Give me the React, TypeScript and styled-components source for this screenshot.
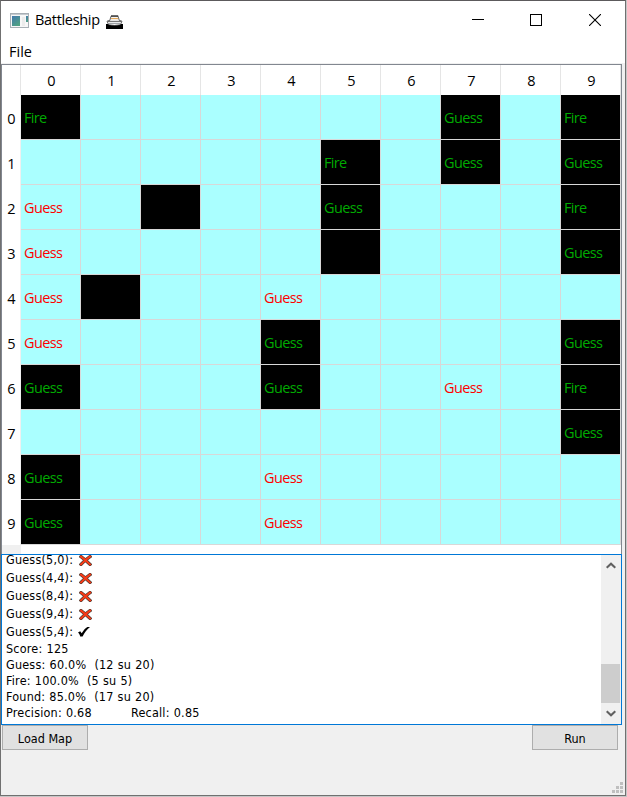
import React from "react";
import styled, { createGlobalStyle } from "styled-components";

const GlobalStyle = createGlobalStyle`
  html, body { margin: 0; padding: 0; overflow: hidden; }
  * { box-sizing: border-box; }
`;

const uiFont = `"Open Sans", "Noto Sans", sans-serif`;
const logFont = `"DejaVu Sans Condensed", "DejaVu Sans", sans-serif`;

const Desktop = styled.div`
  width: 627px;
  height: 797px;
  padding: 0 1px 1px 0;
  background: #c6c6c6;
`;

const Window = styled.main`
  width: 626px;
  height: 796px;
  display: flex;
  flex-direction: column;
  background: #f0f0f0;
  border: 1px solid #707070;
  border-top-color: #5c5a5c;
  color: #000;
  font-family: ${uiFont};
`;

const TitleBar = styled.header`
  height: 38px;
  flex: none;
  display: flex;
  align-items: center;
  padding-left: 9px;
  background: #fff;
`;

const Title = styled.h1`
  margin: 0 0 0 6px;
  width: 71px;
  font-size: 14.5px;
  font-weight: 400;
  letter-spacing: -0.32px;
  line-height: 20px;
  white-space: nowrap;
`;

const WindowControls = styled.div`
  display: flex;
  margin-left: auto;
  padding-right: 1px;
`;

const ControlButton = styled.button`
  width: 58.5px;
  height: 36px;
  padding: 0;
  border: 0;
  background: transparent;
  display: grid;
  place-items: center;
`;

const MenuBar = styled.nav`
  height: 25px;
  flex: none;
  padding-left: 8px;
  background: #fff;
  border-bottom: 1px solid #f0f0f0;
  font-size: 14.5px;
  line-height: 25px;
  letter-spacing: 0;
`;

const Table = styled.section`
  width: 621px;
  height: 490px;
  flex: none;
  display: grid;
  grid-template-columns: 19px repeat(10, 60px);
  grid-template-rows: 30px repeat(10, 45px) 9px;
  background: #fff;
  border: 1px solid #828790;
  border-bottom: 0;
`;

const Corner = styled.div`
  border-right: 1px solid #e5e5e5;
`;

const HeaderCell = styled.div`
  display: flex;
  align-items: center;
  justify-content: center;
  padding-left: 2px;
  border-right: 1px solid #e5e5e5;
  font-size: 14.5px;
`;

const RowLabel = styled.div`
  display: flex;
  align-items: center;
  justify-content: center;
  padding: 2px 0 0 1px;
  border-right: 1px solid #f0f0f0;
  font-size: 14.5px;
`;

const Cell = styled.div<{ $ship: boolean; $hit: boolean }>`
  display: flex;
  align-items: center;
  padding: 1px 0 0 3px;
  background: ${(p) => (p.$ship ? "#000" : "#aaffff")};
  color: ${(p) => (p.$hit ? "#00aa00" : "#ff0000")};
  border-right: 1px solid #d8d8d8;
  border-bottom: 1px solid #d8d8d8;
  font-size: 14.5px;
  letter-spacing: -0.65px;
`;

const TableFoot = styled.div`
  background: #f0f0f0;
`;

const LogPanel = styled.section`
  width: 621px;
  height: 171px;
  flex: none;
  display: flex;
  border: 1px solid #0078d7;
  background: #fff;
`;

const LogText = styled.div`
  flex: 1;
  display: flex;
  flex-direction: column;
  justify-content: flex-end;
  overflow: hidden;
  padding: 0 0 3px 4px;
  font-family: ${logFont};
  font-size: 12.5px;
  letter-spacing: 0.2px;
  word-spacing: 0.3px;
`;

const LogLine = styled.div<{ $icon?: boolean }>`
  flex: none;
  display: flex;
  align-items: center;
  height: ${(p) => (p.$icon ? 18 : 16)}px;
  line-height: 16px;
  white-space: pre;
`;

const GuessText = styled.span<{ $hit: boolean }>`
  width: ${(p) => (p.$hit ? 72 : 73)}px;
`;

const Metric = styled.span`
  width: 125px;
`;

const ScrollBar = styled.div`
  width: 20px;
  display: flex;
  flex-direction: column;
  align-items: flex-start;
  background: #f0f0f0;
`;

const ScrollArrow = styled.div`
  width: 19px;
  height: 21px;
  display: grid;
  place-items: center;
`;

const ScrollThumb = styled.div`
  width: 19px;
  height: 39px;
  margin-top: auto;
  background: #cdcdcd;
`;

const ButtonRow = styled.footer`
  width: 617px;
  display: flex;
  justify-content: space-between;
  padding-left: 1px;
`;

const PushButton = styled.button`
  width: 86px;
  height: 25px;
  padding: 1px 0 0;
  border: 1px solid #adadad;
  background: #e1e1e1;
  color: #000;
  font-family: ${logFont};
  font-size: 12.5px;
`;

const StatusStrip = styled.div`
  flex: 1;
  display: flex;
  align-items: flex-end;
  justify-content: flex-end;
  padding: 0 2px 2px 0;
`;

const ShipSvg = styled.svg`
  margin-top: 3px;
`;

function AppIcon() {
  return (
    <svg width="19" height="15" viewBox="0 0 19 15" shapeRendering="crispEdges">
      <defs>
        <linearGradient id="pane" x1="0" y1="0" x2="0.6" y2="1">
          <stop offset="0" stopColor="#4378ad" />
          <stop offset="1" stopColor="#4fa184" />
        </linearGradient>
      </defs>
      <rect x="0.5" y="0.5" width="18" height="14" fill="#f7f7f7" stroke="#a8afb5" />
      <path d="M1 1.5h17" stroke="#c5cbd0" />
      <rect x="2" y="3" width="8" height="10" fill="url(#pane)" />
      <path d="M12 4h3v9h-3z" fill="#ececec" />
      <path d="M16 3h2v6h-2z" fill="url(#pane)" />
    </svg>
  );
}

function ShipIcon() {
  return (
    <ShipSvg width="17" height="14" viewBox="0 0 17 14">
      <path d="M0 9h17v5H0z" fill="#000" />
      <path d="M1 6.2l2.8-.8L5 1.2h7l1.3 4.2 2.7.8-1.6 3.6q-5.9 1.4-11.8 0z" fill="#f4f4f4" stroke="#222" strokeWidth="0.7" />
      <path d="M5 1h7.2" stroke="#222" strokeWidth="1.1" />
      <path d="M5 3.6h7.2" stroke="#e6a34c" strokeWidth="1" />
      <path d="M2 6.4h13" stroke="#444" strokeWidth="0.8" />
      <path d="M2.6 8.4h11.8" stroke="#8a8f94" strokeWidth="0.9" />
    </ShipSvg>
  );
}

function CrossIcon() {
  return (
    <svg width="13" height="11" viewBox="0 0 13 11">
      <path d="M2 1.6Q6 4.5 11 9.4M11 1.6Q6 5 2 9.4" fill="none" stroke="#4a4038" strokeWidth="3.3" strokeLinecap="square" />
      <path d="M2 1.6Q6 4.5 11 9.4M11 1.6Q6 5 2 9.4" fill="none" stroke="#f83a16" strokeWidth="2" strokeLinecap="square" />
    </svg>
  );
}

function CheckIcon() {
  return (
    <svg width="12" height="10" viewBox="0 0 12 10">
      <path d="M0 5.5l2.2-1.2 1.5 2C5.5 3.2 7.6 1 9.4 0H12C8.8 2.4 6.5 5.5 4.6 9.5H2.2C1.8 7.7 1.1 6.6 0 5.5z" fill="#000" />
    </svg>
  );
}

function Chevron({ down = false }: { down?: boolean }) {
  return (
    <svg width="10" height="7" viewBox="0 0 10 7">
      <path d={down ? "M.7 1.2L5 5.2l4.3-4" : "M.7 5.8L5 1.8l4.3 4"} fill="none" stroke="#606060" strokeWidth="2.1" />
    </svg>
  );
}

function SizeGrip() {
  const dots = [[8, 0], [4, 4], [8, 4], [0, 8], [4, 8], [8, 8]];
  return (
    <svg width="11" height="11" viewBox="0 0 11 11">
      {dots.map(([x, y]) => (
        <rect key={`${x}-${y}`} x={x} y={y} width="3" height="3" fill="#bfbfbf" />
      ))}
    </svg>
  );
}

// F = fire hit, G = guess hit, M = missed guess, S = undiscovered ship
const board = [
  "F......G.F",
  ".....F.G.G",
  "M.S..G...F",
  "M....S...G",
  "MS..M.....",
  "M...G....G",
  "G...G..M.F",
  ".........G",
  "G...M.....",
  "G...M.....",
];

const labels: Record<string, string> = { F: "Fire", G: "Guess", M: "Guess" };

const guesses = [
  { at: "5,0", hit: false },
  { at: "4,4", hit: false },
  { at: "8,4", hit: false },
  { at: "9,4", hit: false },
  { at: "5,4", hit: true },
];

const summary = [
  "Score: 125",
  "Guess: 60.0%  (12 su 20)",
  "Fire: 100.0%  (5 su 5)",
  "Found: 85.0%  (17 su 20)",
];

export default function App() {
  return (
    <Desktop>
      <GlobalStyle />
      <Window>
        <TitleBar>
          <AppIcon />
          <Title>Battleship</Title>
          <ShipIcon />
          <WindowControls>
            <ControlButton aria-label="Minimize">
              <svg width="12" height="12"><path d="M0 5.5h12" stroke="#000" /></svg>
            </ControlButton>
            <ControlButton aria-label="Maximize">
              <svg width="12" height="12" shapeRendering="crispEdges"><rect x=".5" y=".5" width="11" height="11" fill="none" stroke="#000" /></svg>
            </ControlButton>
            <ControlButton aria-label="Close">
              <svg width="12" height="12"><path d="M0 0l12 12M12 0L0 12" stroke="#000" strokeWidth="1.1" /></svg>
            </ControlButton>
          </WindowControls>
        </TitleBar>
        <MenuBar>File</MenuBar>
        <Table>
          <Corner />
          {board.map((_, i) => <HeaderCell key={i}>{i}</HeaderCell>)}
          {board.map((row, r) => (
            <React.Fragment key={r}>
              <RowLabel>{r}</RowLabel>
              {[...row].map((c, i) => (
                <Cell key={i} $ship={"FGS".includes(c)} $hit={c !== "M"}>{labels[c]}</Cell>
              ))}
            </React.Fragment>
          ))}
          <TableFoot />
        </Table>
        <LogPanel>
          <LogText>
            {guesses.map((g) => (
              <LogLine key={g.at} $icon>
                <GuessText $hit={g.hit}>Guess({g.at}):</GuessText>
                {g.hit ? <CheckIcon /> : <CrossIcon />}
              </LogLine>
            ))}
            {summary.map((s) => <LogLine key={s}>{s}</LogLine>)}
            <LogLine><Metric>Precision: 0.68</Metric><span>Recall: 0.85</span></LogLine>
          </LogText>
          <ScrollBar>
            <ScrollArrow><Chevron /></ScrollArrow>
            <ScrollThumb />
            <ScrollArrow><Chevron down /></ScrollArrow>
          </ScrollBar>
        </LogPanel>
        <ButtonRow>
          <PushButton>Load Map</PushButton>
          <PushButton>Run</PushButton>
        </ButtonRow>
        <StatusStrip><SizeGrip /></StatusStrip>
      </Window>
    </Desktop>
  );
}
